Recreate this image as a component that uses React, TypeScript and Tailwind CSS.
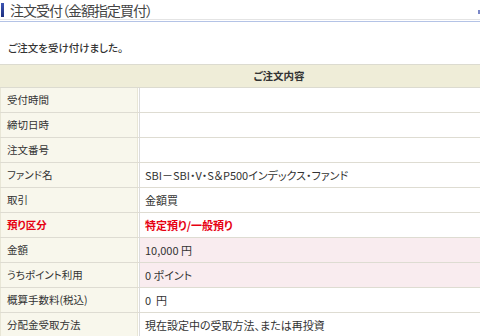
import React from "react";

type Row = { label: string; value: string; red?: boolean; pink?: boolean };

const rows: Row[] = [
  { label: "受付時間", value: "" },
  { label: "締切日時", value: "" },
  { label: "注文番号", value: "" },
  { label: "ファンド名", value: "SBI－SBI・V・S＆P500インデックス・ファンド" },
  { label: "取引", value: "金額買" },
  { label: "預り区分", value: "特定預り/一般預り", red: true },
  { label: "金額", value: "10,000 円", pink: true },
  { label: "うちポイント利用", value: "0 ポイント", pink: true },
  { label: "概算手数料(税込)", value: "0  円" },
  { label: "分配金受取方法", value: "現在設定中の受取方法、または再投資" },
];

export default function App() {
  return (
    <div
      className="relative w-[480px] h-[336px] overflow-hidden bg-white text-[#333]"
      style={{
        fontFamily: '"Noto Sans CJK JP", "Noto Sans", sans-serif',
        fontFeatureSettings: '"palt"',
      }}
    >
      <div className="flex items-center h-[19px] pl-[1px]">
        <div className="w-[3px] h-[14px] bg-gradient-to-b from-[#3e56b4] to-[#1c2f80]" />
        <span className="ml-[6px] text-[14px] leading-none text-[#444] tracking-[-1px]">
          注文受付（金額指定買付）
        </span>
      </div>
      <div className="h-px bg-[#e4e4e4]" />
      <div className="h-px mt-px bg-[#b4c3e6]" />
      <div className="absolute right-0 top-[10px] w-[2px] h-[4px] bg-[#7b88c8]" />
      <div className="pt-[18px] pb-[8px] pl-[8px] text-[10.5px] leading-[16px] h-[42px] font-medium">
        ご注文を受け付けました。
      </div>
      <div className="w-[552px]">
        <div className="h-[24px] border-t border-b border-[#dcdbd0] bg-[#efedd8] flex items-center justify-center text-[10.5px] font-bold text-[#333]">
          <span className="ml-[6px]">ご注文内容</span>
        </div>
        {rows.map((r) => (
          <div key={r.label} className="flex h-[25px] border-b border-[#dedcd2]">
            <div
              className={`w-[138px] shrink-0 border-l border-r border-[#e8e6d6] bg-[#f8f7ec] pl-[6px] flex items-center text-[10.5px] ${
                r.red ? "text-[#e60012] font-bold" : "text-[#333]"
              }`}
            >
              {r.label}
            </div>
            <div
              className={`flex-1 ml-px border-l border-[#dcdcdc] pl-[5px] flex items-center text-[11px] whitespace-pre ${
                r.pink ? "bg-[#f9ecef]" : "bg-white"
              } ${r.red ? "text-[#e60012] font-bold" : "text-[#333]"}`}
            >
              {r.value}
            </div>
          </div>
        ))}
      </div>
    </div>
  );
}
